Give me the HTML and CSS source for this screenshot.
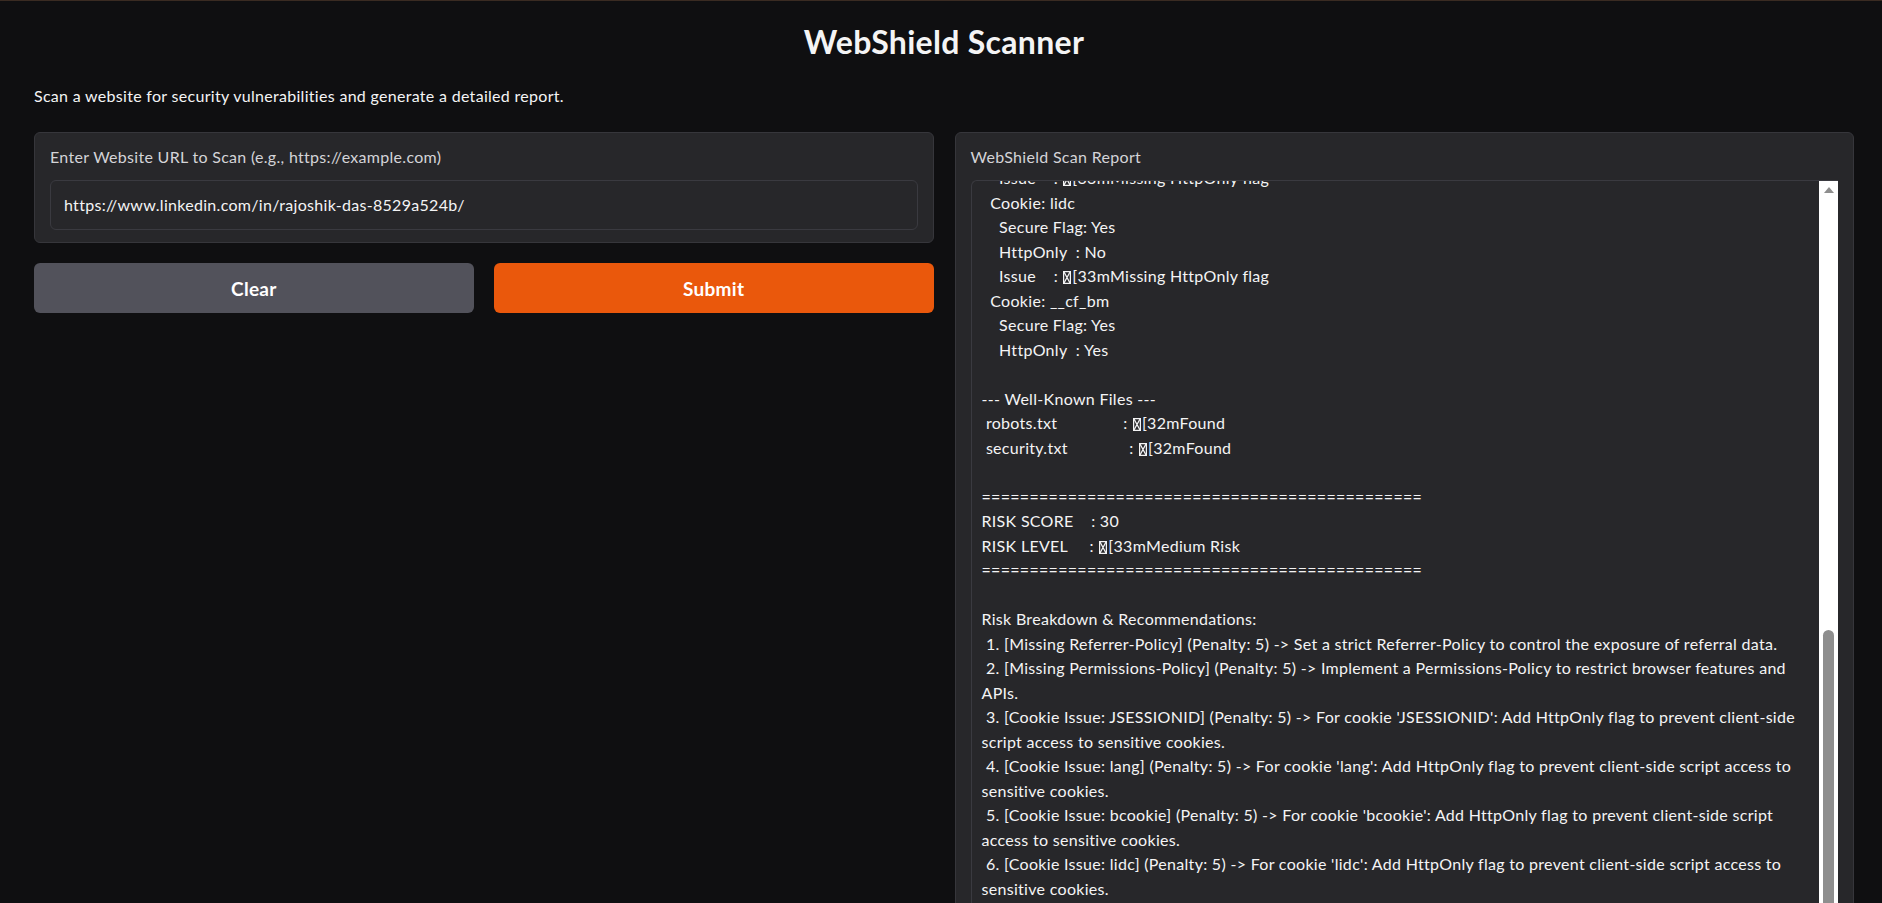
FILE: index.html
```html
<!DOCTYPE html>
<html lang="en">
  <head>
    <meta charset="UTF-8" />
    <meta name="viewport" content="width=device-width, initial-scale=1.0" />
    <title>WebShield Scanner</title>
    <link rel="stylesheet" href="styles.css">
  </head>
  <body>
    <div class="app">
      <h1 class="title">WebShield Scanner</h1>
      <p class="subtitle">Scan a website for security vulnerabilities and generate a detailed report.</p>

      <div class="row">
        <div class="col">
          <div class="block">
            <label class="block-label">Enter Website URL to Scan (e.g., https://example.com)</label>
            <div class="input">https://www.linkedin.com/in/rajoshik-das-8529a524b/</div>
          </div>
          <div class="buttons">
            <button class="btn btn-secondary">Clear</button>
            <button class="btn btn-primary">Submit</button>
          </div>
        </div>

        <div class="col">
          <div class="block block-report">
            <label class="block-label">WebShield Scan Report</label>
            <div class="report">
              <div class="report-body">
<pre class="report-text">    Issue    : <svg class="esc" viewBox="0 0 8 13"><rect x=".6" y=".6" width="6.8" height="11.8" /><path d="M1 1L7 12M7 1L1 12" /></svg>[33mMissing HttpOnly flag
  Cookie: lidc
    Secure Flag: Yes
    HttpOnly  : No
    Issue    : <svg class="esc" viewBox="0 0 8 13"><rect x=".6" y=".6" width="6.8" height="11.8" /><path d="M1 1L7 12M7 1L1 12" /></svg>[33mMissing HttpOnly flag
  Cookie: __cf_bm
    Secure Flag: Yes
    HttpOnly  : Yes

--- Well-Known Files ---
 robots.txt               : <svg class="esc" viewBox="0 0 8 13"><rect x=".6" y=".6" width="6.8" height="11.8" /><path d="M1 1L7 12M7 1L1 12" /></svg>[32mFound
 security.txt              : <svg class="esc" viewBox="0 0 8 13"><rect x=".6" y=".6" width="6.8" height="11.8" /><path d="M1 1L7 12M7 1L1 12" /></svg>[32mFound

==============================================
RISK SCORE    : 30
RISK LEVEL     : <svg class="esc" viewBox="0 0 8 13"><rect x=".6" y=".6" width="6.8" height="11.8" /><path d="M1 1L7 12M7 1L1 12" /></svg>[33mMedium Risk
==============================================

Risk Breakdown &amp; Recommendations:
 1. [Missing Referrer-Policy] (Penalty: 5) -&gt; Set a strict Referrer-Policy to control the exposure of referral data.
 2. [Missing Permissions-Policy] (Penalty: 5) -&gt; Implement a Permissions-Policy to restrict browser features and
APIs.
 3. [Cookie Issue: JSESSIONID] (Penalty: 5) -&gt; For cookie 'JSESSIONID': Add HttpOnly flag to prevent client-side
script access to sensitive cookies.
 4. [Cookie Issue: lang] (Penalty: 5) -&gt; For cookie 'lang': Add HttpOnly flag to prevent client-side script access to
sensitive cookies.
 5. [Cookie Issue: bcookie] (Penalty: 5) -&gt; For cookie 'bcookie': Add HttpOnly flag to prevent client-side script
access to sensitive cookies.
 6. [Cookie Issue: lidc] (Penalty: 5) -&gt; For cookie 'lidc': Add HttpOnly flag to prevent client-side script access to
sensitive cookies.
 7. [Cookie Issue: __cf_bm] (Penalty: 5) -&gt; For cookie '__cf_bm': Add HttpOnly flag to prevent client-side script
access to sensitive cookies.</pre>
              </div>
              <div class="scrollbar">
                <span class="scroll-arrow"></span>
                <span class="scroll-thumb"></span>
              </div>
            </div>
          </div>
        </div>
      </div>
    </div>
  </body>
</html>
```

FILE: styles.css
```css
* {
  margin: 0;
  padding: 0;
  box-sizing: border-box;
}

body {
  font-family: "Lato", "Noto Sans", sans-serif;
  letter-spacing: 0.3px;
  background: #0f0f11;
  color: #f4f4f5;
  height: 100vh;
  overflow: hidden;
  border-top: 1px solid #3a2b22;
}

.app {
  padding: 0 28px 0 34px;
}

.title {
  margin-top: 22px;
  font-size: 32px;
  line-height: 38px;
  font-weight: 700;
  text-align: center;
  color: #f4f4f5;
}

.subtitle {
  margin-top: 23px;
  font-size: 16px;
  line-height: 24px;
  color: #f4f4f5;
}

.row {
  margin-top: 24px;
  display: flex;
  gap: 21px;
}

.col {
  flex: 1;
  display: flex;
  flex-direction: column;
  gap: 20px;
}

.block {
  background: #27272a;
  border: 1px solid #36363b;
  border-radius: 6px;
  padding: 12px 15px;
}

.block-label {
  display: block;
  font-size: 16px;
  line-height: 24px;
  color: #d4d4d8;
  margin-bottom: 11px;
}

.input {
  background: #27272a;
  border: 1px solid #3a3a40;
  border-radius: 6px;
  padding: 12px 13px;
  font-size: 16px;
  line-height: 24px;
  color: #f4f4f5;
}

.buttons {
  display: flex;
  gap: 20px;
}

.btn {
  flex: 1;
  height: 50px;
  border: none;
  border-radius: 6px;
  font-family: inherit;
  font-size: 19px;
  font-weight: 700;
  letter-spacing: 0.3px;
  color: #ffffff;
}

.btn-secondary {
  background: #52525b;
}

.btn-primary {
  background: #ea580c;
}

.block-report {
  height: 790px;
  padding-bottom: 0;
}

.report {
  display: flex;
  height: 760px;
  background: #27272a;
  border: 1px solid #3a3a40;
  border-right: none;
  border-radius: 6px 0 0 0;
  overflow: hidden;
}

.report-body {
  flex: 1;
  overflow: hidden;
  padding: 0 10px;
}

.report-text {
  margin-top: -15px;
  font-family: "Lato", "Noto Sans", sans-serif;
  font-size: 16px;
  line-height: 24.5px;
  color: #f4f4f5;
  white-space: pre;
}

.esc {
  width: 8px;
  height: 13px;
  vertical-align: -2px;
  margin: 0 1px;
  fill: none;
  stroke: #f4f4f5;
  stroke-width: 1.3;
}

.scrollbar {
  width: 19px;
  background: #ffffff;
  display: flex;
  flex-direction: column;
  align-items: center;
}

.scroll-arrow {
  margin-top: 6px;
  width: 0;
  height: 0;
  border-left: 5px solid transparent;
  border-right: 5px solid transparent;
  border-bottom: 6px solid #8e8e8e;
}

.scroll-thumb {
  margin-top: 437px;
  width: 11px;
  flex: 1;
  background: #8e8e8e;
  border-radius: 6px 6px 0 0;
}
```
